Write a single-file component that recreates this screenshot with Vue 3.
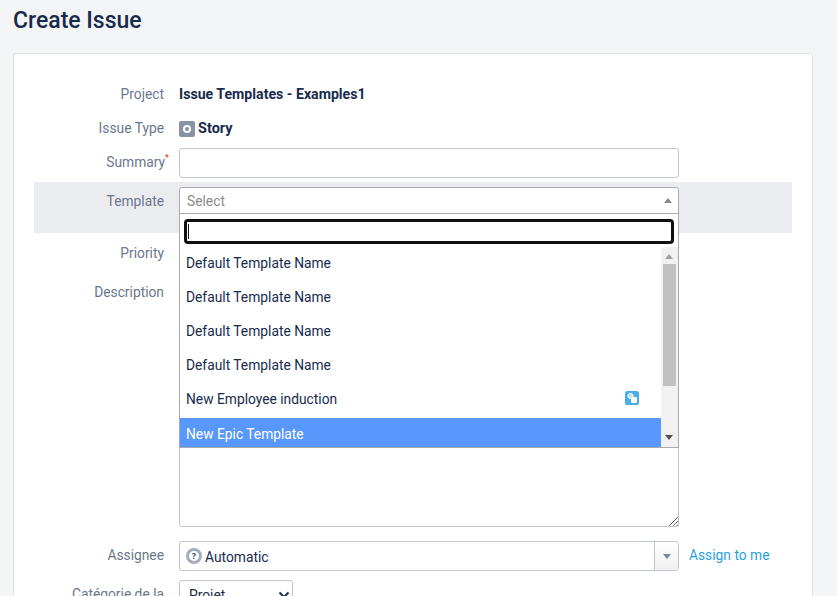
<script setup>
const options = [
  { name: 'Default Template Name' },
  { name: 'Default Template Name' },
  { name: 'Default Template Name' },
  { name: 'Default Template Name' },
  { name: 'New Employee induction', shared: true },
  { name: 'New Epic Template', active: true }
]
</script>

<template>
  <div class="page">
    <h1 class="title">Create Issue</h1>
    <section class="card">
      <div class="row project-row">
        <div class="label">Project</div>
        <div class="value strong">Issue Templates - Examples1</div>
      </div>
      <div class="row type-row">
        <div class="label">Issue Type</div>
        <div class="value strong type">
          <svg class="type-icon" width="16" height="16" viewBox="0 0 16 16">
            <rect width="16" height="16" rx="2" fill="#8993a4" />
            <circle cx="8" cy="8" r="3" fill="none" stroke="#fff" stroke-width="2" />
          </svg>
          <span class="type-name">Story</span>
        </div>
      </div>
      <div class="row summary-row">
        <div class="label">Summary<sup class="req">*</sup></div>
        <div class="input"></div>
      </div>
      <div class="row template-row">
        <div class="label">Template</div>
        <div class="picker">
          <div class="select-box">
            <span class="placeholder">Select</span>
            <span class="tri up"></span>
          </div>
          <div class="dropdown">
            <div class="search"><span class="caret"></span></div>
            <div class="list">
              <div class="options">
                <div v-for="(o, i) in options" :key="i" class="option" :class="{ active: o.active }">
                  <span>{{ o.name }}</span>
                  <svg v-if="o.shared" class="share" width="14" height="14" viewBox="0 0 14 14">
                    <rect width="14" height="14" rx="2" fill="#4baee8" />
                    <circle cx="5.5" cy="5" r="2.6" fill="#bfe3f8" stroke="#fff" stroke-width="1" />
                    <rect x="6" y="6" width="6" height="6" rx="1.5" fill="#fff" />
                  </svg>
                </div>
              </div>
              <div class="scrollbar">
                <span class="tri small up-grey"></span>
                <div class="thumb"></div>
                <span class="tri small down-dark"></span>
              </div>
            </div>
          </div>
        </div>
      </div>
      <div class="row priority-row">
        <div class="label">Priority</div>
      </div>
      <div class="row desc-row">
        <div class="label">Description</div>
        <div class="textarea">
          <svg class="grip" width="9" height="9" viewBox="0 0 9 9">
            <path d="M0 9 9 0M4 9 9 4M7.5 9 9 7.5" stroke="#666" stroke-width="1" fill="none" />
          </svg>
        </div>
      </div>
      <div class="row assignee-row">
        <div class="label">Assignee</div>
        <div class="assignee">
          <svg class="avatar" width="16" height="16" viewBox="0 0 16 16">
            <circle cx="8" cy="8" r="8" fill="#a5adba" />
            <circle cx="8" cy="8" r="5" fill="#fff" />
            <text x="8" y="11" text-anchor="middle" class="q">?</text>
          </svg>
          <span class="assignee-name">Automatic</span>
          <span class="assignee-btn"><span class="tri down-grey"></span></span>
        </div>
        <a class="assign-link">Assign to me</a>
      </div>
      <div class="row cat-row">
        <div class="label">Catégorie de la</div>
        <div class="native">
          <span>Projet</span>
          <svg width="12" height="8" viewBox="0 0 12 8">
            <path d="M1.5 1.5 6 6l4.5-4.5" fill="none" stroke="#172b4d" stroke-width="2" />
          </svg>
        </div>
      </div>
    </section>
  </div>
</template>

<style>
html, body { margin: 0; background: #f4f5f7; }
</style>

<style scoped>
.page {
  height: 596px;
  overflow: hidden;
  box-sizing: border-box;
  padding: 0 24px 0 13px;
  background: #f4f5f7;
  font-family: Roboto, "Noto Sans", sans-serif;
  font-size: 13.8px;
  color: #172b4d;
}
.title {
  margin: 0;
  height: 53px;
  padding-top: 6px;
  box-sizing: border-box;
  font-size: 23px;
  line-height: 30px;
  font-weight: 500;
  color: #172b4d;
}
.card {
  box-sizing: border-box;
  height: 620px;
  padding: 0 20px;
  background: #fff;
  border: 1px solid #dfe1e6;
  border-radius: 3px;
}
.row {
  display: flex;
  align-items: flex-start;
  column-gap: 15px;
}
.label {
  flex: none;
  width: 130px;
  text-align: right;
  color: #6b778c;
  line-height: 20px;
  white-space: nowrap;
}
.req { color: #de350b; font-size: 9px; line-height: 0; margin-right: -5px; }
.value { line-height: 20px; }
.strong { font-weight: 700; font-size: 14.15px; color: #172b4d; }
.project-row { margin-top: 30px; height: 20px; }
.type-row { margin-top: 14px; height: 20px; }
.type { display: flex; align-items: center; gap: 3px; font-size: 14.5px; }
.type-name { padding-top: 1px; }
.type-icon { display: block; }
.summary-row { margin-top: 10px; height: 34px; }
.summary-row .label { padding-top: 4px; }
.input {
  box-sizing: border-box;
  width: 500px;
  height: 30px;
  background: #fff;
  border: 1px solid #c1c7d0;
  border-radius: 3px;
}
.template-row {
  height: 51px;
  background: #ebecf0;
  box-sizing: border-box;
  padding-top: 5px;
}
.template-row .label { padding-top: 4px; }
.picker { position: relative; width: 500px; }
.select-box {
  box-sizing: border-box;
  height: 27px;
  display: flex;
  align-items: center;
  justify-content: space-between;
  padding: 0 6px 0 7px;
  background: #fff;
  border: 1px solid #aaa;
  border-radius: 3px 3px 0 0;
}
.placeholder { color: #8a8a8a; }
.tri {
  display: block;
  width: 0;
  height: 0;
  border-left: 4.5px solid transparent;
  border-right: 4.5px solid transparent;
}
.tri.up { border-bottom: 5px solid #888; }
.tri.small { margin: 0 auto; }
.up-grey { border-bottom: 5px solid #a0a0a0; }
.down-dark { border-top: 5px solid #505050; }
.down-grey { border-top: 5px solid #7a869a; }
.dropdown {
  position: absolute;
  z-index: 2;
  top: 26px;
  left: 0;
  width: 500px;
  height: 235px;
  box-sizing: border-box;
  background: #fff;
  border: 1px solid #aaa;
  padding-top: 5px;
}
.search {
  box-sizing: border-box;
  width: 490px;
  height: 25px;
  margin-left: 4px;
  border: 3px solid #101010;
  border-radius: 4px;
  padding: 2px 0 0 1px;
}
.caret { display: block; width: 1px; height: 15px; background: #111; }
.list { display: flex; height: 200px; margin-top: 3px; }
.options { flex: 1; overflow: hidden; }
.option {
  box-sizing: border-box;
  height: 34px;
  padding: 6px 22px 0 6px;
  line-height: 20px;
  display: flex;
  justify-content: space-between;
  align-items: flex-start;
}
.option.active { background: #5897fb; color: #fff; height: 30px; margin-top: 1px; padding-top: 6px; }
.share { margin-top: 2px; }
.scrollbar {
  flex: none;
  position: relative;
  width: 17px;
  background: #f1f1f1;
}
.scrollbar .up-grey { position: absolute; top: 7px; left: 4px; }
.scrollbar .down-dark { position: absolute; bottom: 7px; left: 4px; }
.thumb {
  position: absolute;
  left: 2px;
  top: 17px;
  width: 13px;
  height: 122px;
  background: #c1c1c1;
}
.priority-row { height: 39px; padding-top: 10px; }
.desc-row { height: 259px; }
.textarea {
  position: relative;
  box-sizing: border-box;
  width: 500px;
  height: 256px;
  margin-top: -11px;
  background: #fff;
  border: 1px solid #c1c7d0;
  border-radius: 3px;
}
.grip { position: absolute; right: 0; bottom: 0; }
.assignee-row { height: 39px; }
.assignee-row .label { padding-top: 4px; }
.assignee {
  box-sizing: border-box;
  width: 500px;
  height: 30px;
  display: flex;
  align-items: center;
  border: 1px solid #c1c7d0;
  border-radius: 3px;
  padding-left: 6px;
}
.avatar { flex: none; }
.q { font-size: 9px; font-weight: 700; fill: #42526e; font-family: "Noto Sans", sans-serif; }
.assignee-name { flex: 1; margin-left: 3px; padding-top: 2px; }
.assignee-btn {
  flex: none;
  box-sizing: border-box;
  width: 24px;
  height: 28px;
  display: flex;
  align-items: center;
  justify-content: center;
  border-left: 1px solid #c1c7d0;
  background: linear-gradient(#fff, #f0f0f0);
  border-radius: 0 3px 3px 0;
}
.assign-link { margin: 4px 0 0 -5px; line-height: 20px; color: #2a9fe0; white-space: nowrap; }
.native {
  box-sizing: border-box;
  width: 114px;
  height: 30px;
  border: 1px solid #c1c7d0;
  border-radius: 3px;
  padding: 0 2px 0 9px;
  display: flex;
  align-items: center;
  justify-content: space-between;
}
.cat-row .label { padding-top: 4px; }
</style>
